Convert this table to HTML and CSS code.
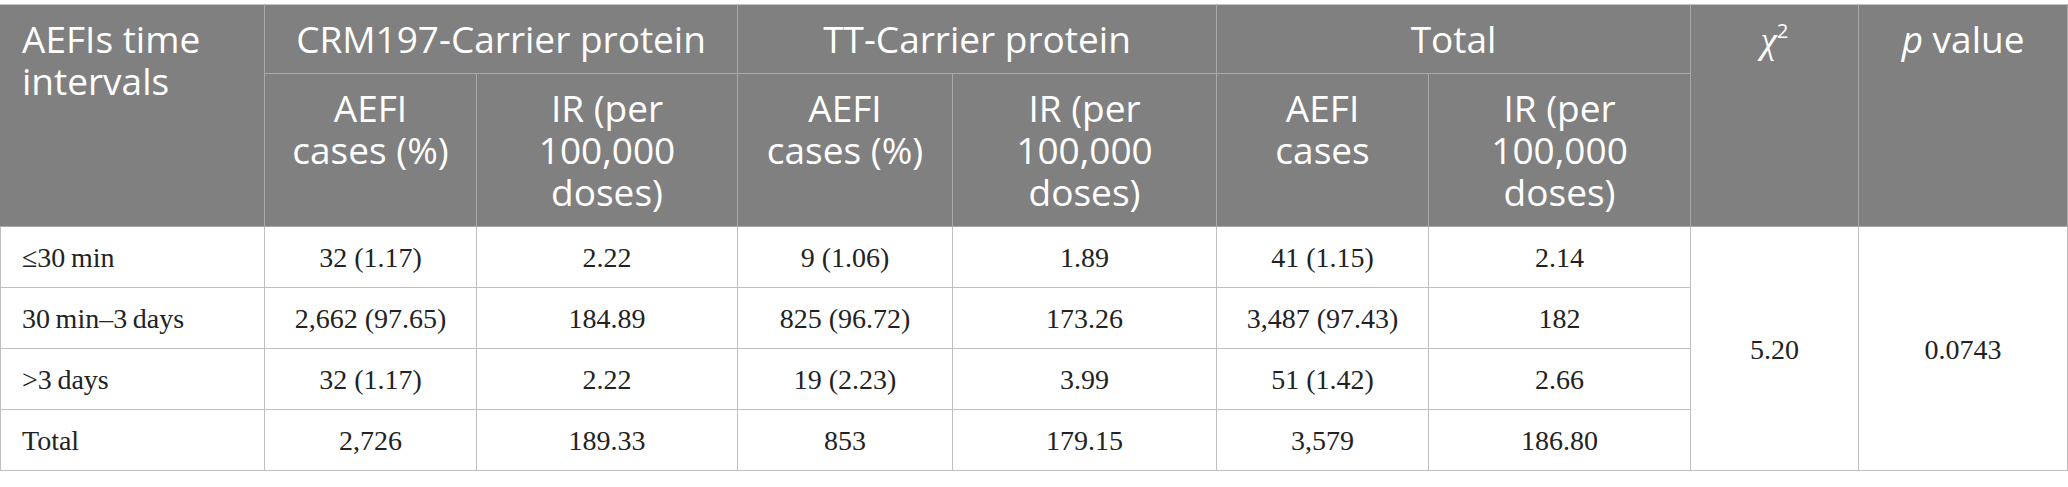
FILE: index.html
```html
<!DOCTYPE html>
<html lang="en">
<head>
  <meta charset="UTF-8">
  <title>AEFIs time intervals</title>
  <link rel="stylesheet" href="styles.css">
</head>
<body>
  <table class="tabla">
    <colgroup>
      <col class="c-intervalo">
      <col class="c-casos">
      <col class="c-tasa">
      <col class="c-casos2">
      <col class="c-casos3">
      <col class="c-tasa2">
      <col class="c-tasa3">
      <col class="c-chi">
      <col class="c-p">
    </colgroup>
    <thead>
      <tr class="fila-grupo">
        <th rowspan="2" class="izq">AEFIs time<br>intervals</th>
        <th colspan="2">CRM197-Carrier protein</th>
        <th colspan="2">TT-Carrier protein</th>
        <th colspan="2">Total</th>
        <th rowspan="2"><i class="chi">χ</i><sup>2</sup></th>
        <th rowspan="2"><i>p</i> value</th>
      </tr>
      <tr class="fila-sub">
        <th>AEFI<br>cases (%)</th>
        <th>IR (per<br>100,000<br>doses)</th>
        <th>AEFI<br>cases (%)</th>
        <th>IR (per<br>100,000<br>doses)</th>
        <th>AEFI<br>cases</th>
        <th>IR (per<br>100,000<br>doses)</th>
      </tr>
    </thead>
    <tbody>
      <tr>
        <td class="izq">≤30&thinsp;min</td>
        <td>32 (1.17)</td>
        <td>2.22</td>
        <td>9 (1.06)</td>
        <td>1.89</td>
        <td>41 (1.15)</td>
        <td>2.14</td>
        <td rowspan="4">5.20</td>
        <td rowspan="4">0.0743</td>
      </tr>
      <tr>
        <td class="izq">30&thinsp;min–3&thinsp;days</td>
        <td>2,662 (97.65)</td>
        <td>184.89</td>
        <td>825 (96.72)</td>
        <td>173.26</td>
        <td>3,487 (97.43)</td>
        <td>182</td>
      </tr>
      <tr>
        <td class="izq">&gt;3&thinsp;days</td>
        <td>32 (1.17)</td>
        <td>2.22</td>
        <td>19 (2.23)</td>
        <td>3.99</td>
        <td>51 (1.42)</td>
        <td>2.66</td>
      </tr>
      <tr>
        <td class="izq">Total</td>
        <td>2,726</td>
        <td>189.33</td>
        <td>853</td>
        <td>179.15</td>
        <td>3,579</td>
        <td>186.80</td>
      </tr>
    </tbody>
  </table>
</body>
</html>
```

FILE: styles.css
```css
body {
  margin: 0;
  padding-top: 4px;
  background: #ffffff;
}

.tabla {
  border-collapse: collapse;
  table-layout: fixed;
  width: 2067px;
}

.c-intervalo { width: 264px; }
.c-casos { width: 212px; }
.c-tasa { width: 261px; }
.c-casos2 { width: 215px; }
.c-casos3 { width: 264px; }
.c-tasa2 { width: 212px; }
.c-tasa3 { width: 262px; }
.c-chi { width: 168px; }
.c-p { width: 209px; }

.tabla th {
  background: #7f807f;
  color: #ffffff;
  font-family: "Open Sans", "Noto Sans", sans-serif;
  font-weight: normal;
  font-size: 37px;
  line-height: 42px;
  text-align: center;
  vertical-align: top;
  padding: 13px 10px 13px;
  border: 1px solid #a9a9a9;
  border-left-color: #7f807f;
  border-top-color: #c4c4c4;
}

.tabla th + th {
  border-left-color: #a9a9a9;
}

.fila-grupo th {
  height: 42px;
}

.fila-sub th {
  height: 126px;
}

.tabla th.izq,
.tabla td.izq {
  text-align: left;
  padding-left: 21px;
}

.chi {
  font-family: "Liberation Serif", serif;
}

.tabla sup {
  font-size: 0.55em;
  line-height: 0;
  vertical-align: 0.75em;
}

.tabla td {
  font-family: "Liberation Serif", "DejaVu Serif", serif;
  font-size: 28px;
  color: #222222;
  text-align: center;
  vertical-align: middle;
  height: 58px;
  padding: 2px 10px 0;
  border: 1px solid #bfbfbf;
}
```
